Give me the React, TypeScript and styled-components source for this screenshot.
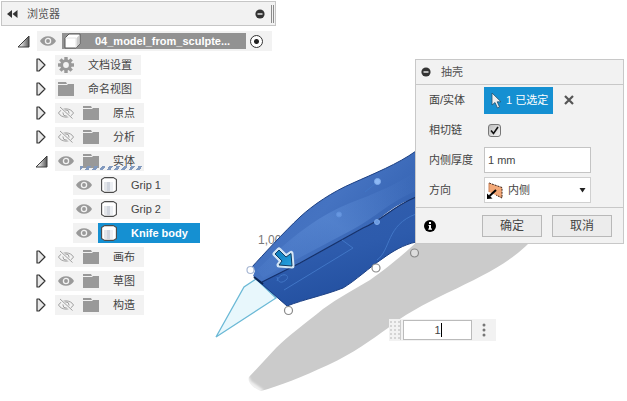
import React, { useState } from "react";
import styled, { createGlobalStyle, css } from "styled-components";

const GlobalStyle = createGlobalStyle`
  *, *::before, *::after { box-sizing: border-box; }
  body {
    margin: 0;
    background: #fff;
    color: #444;
    font: 11px/16px "Liberation Sans", "Noto Sans CJK SC", sans-serif;
  }
  button, input, select { font: inherit; color: inherit; margin: 0; }
  svg { display: block; flex: none; }
`;

const Workspace = styled.main`
  position: relative;
  min-height: 100vh;
  overflow: hidden;
`;

const Scene = styled.svg`
  position: absolute;
  inset: 0;
  width: 100%;
  height: 100%;
`;

/* ---------- browser tree ---------- */

const BrowserPanel = styled.aside`
  position: relative;
  width: 276px;
  padding: 1px 0 0 1px;
`;

const BrowserHeader = styled.header`
  display: flex;
  align-items: center;
  height: 25px;
  padding-left: 5px;
  background: #f2f2f2;
  border: 1px solid #c6c6c6;
`;

const PanelTitle = styled.h2`
  flex: 1;
  margin: 0;
  font-size: 11px;
  line-height: 16px;
  font-weight: 400;
  color: #555;
`;

const IconButton = styled.button`
  display: flex;
  align-items: center;
  justify-content: center;
  flex: none;
  padding: 0;
  border: 0;
  background: none;
`;

const CollapseButton = styled(IconButton)`
  margin-right: 9px;
`;

const ResizeGrip = styled.span`
  width: 3px;
  height: 18px;
  margin: 0 1px 0 6px;
  border: solid #8c8c8c;
  border-width: 0 1px;
`;

const Tree = styled.ul`
  display: grid;
  gap: 4px;
  margin: 5px 0 0;
  padding: 0;
  list-style: none;
`;

const TreeRow = styled.li<{ $depth: number }>`
  display: flex;
  align-items: center;
  height: 20px;
  padding-left: ${(p) => 16 + p.$depth * 18}px;
`;

const Twisty = styled(IconButton)`
  width: 20px;
  height: 20px;
  justify-content: flex-start;
`;

const Spacer = styled.span`
  width: 20px;
`;

const Chip = styled.div`
  display: flex;
  align-items: center;
  height: 20px;
  padding-left: 3px;
  background: #f2f2f2;
`;

const EyeButton = styled(IconButton)`
  width: 16px;
  height: 20px;
  margin-right: 6px;
`;

type Tone = "plain" | "active" | "selected";

const NodeLabel = styled.span<{ $tone: Tone }>`
  position: relative;
  display: flex;
  align-items: center;
  gap: 14px;
  height: 20px;
  padding: 0 9px 0 3px;
  white-space: nowrap;
  ${(p) =>
    p.$tone === "active" &&
    css`
      height: 16px;
      padding: 0 16px 0 2px;
      background: #929292;
      color: #fff;
      font-weight: 700;
    `}
  ${(p) =>
    p.$tone === "selected" &&
    css`
      padding-right: 12px;
      background: #1590d2;
      color: #fff;
      font-weight: 700;
    `}
`;

const SettingsLabel = styled(NodeLabel)`
  padding-left: 0;
`;

const ActivateRadio = styled.input`
  appearance: none;
  flex: none;
  width: 13px;
  height: 13px;
  margin: 0 9px 0 4px;
  border: 1px solid #333;
  border-radius: 50%;
  background: radial-gradient(circle, #222 0 2px, #fff 3px);
`;

const Hatch = styled.span`
  position: absolute;
  left: 0;
  right: 2px;
  bottom: 1px;
  height: 4px;
  background: repeating-linear-gradient(125deg, #8199be 0 3px, transparent 3px 6px);
`;

const Eye = ({ hidden = false }: { hidden?: boolean }) =>
  hidden ? (
    <svg width="16" height="14" viewBox="0 0 16 14" fill="none" stroke="#a0a0a0">
      <path d="M0.5 7C3.5 1.5 12.5 1.5 15.5 7C12.5 12.500 3.5 12.500 0.500 7Z" />
      <circle cx="8" cy="7" r="3" />
      <path d="M2 1.500L14 12.500" stroke="#f2f2f2" strokeWidth="3" />
      <path d="M2 1L14.500 12.500" />
    </svg>
  ) : (
    <svg width="16" height="12" viewBox="0 0 16 12">
      <path d="M0 6C3-.4 13-.4 16 6C13 12.400 3 12.400 0 6Z" fill="#999" />
      <circle cx="8" cy="6" r="2.600" fill="none" stroke="#f2f2f2" strokeWidth="1.300" />
    </svg>
  );

const Folder = () => (
  <svg width="16" height="14" viewBox="0 0 16 14" fill="#999">
    <path d="M0 0H8L9 2H0Z M0 3H9L10 2H16V14H0Z" />
  </svg>
);

const Gear = () => (
  <svg width="16" height="16" viewBox="-8 -8 16 16">
    <g fill="#999">
      {[0, 45, 90, 135].map((a) => (
        <rect key={a} x="-1.700" y="-8" width="3.400" height="16" transform={`rotate(${a})`} />
      ))}
      <circle r="5.800" />
    </g>
    <circle r="2.900" fill="#f2f2f2" />
  </svg>
);

const Cylinder = () => (
  <svg width="16" height="16" viewBox="0 0 16 16">
    <path d="M3.500 .6H12.500L15.400 2.500V13.500L12.500 15.400H3.500L.6 13.500V2.500Z" fill="#fff" stroke="#4a4a4a" strokeWidth="1.100" strokeLinejoin="round" />
    <path d="M3 5H6V14H4L3 13Z" fill="#e3e6ea" />
    <path d="M6 5H9V14H6Z" fill="#d0d5de" />
    <path d="M9 5H12V14H9Z" fill="#eceff3" />
  </svg>
);

const Cube = () => (
  <svg width="17" height="16" viewBox="0 0 17 16">
    <path d="M1 5L5 1H16V11L12 15H1Z" fill="#fff" stroke="#5a5a5a" strokeLinejoin="round" />
    <path d="M12.500 5L15.500 2V11L12.500 14Z" fill="#ccc" />
    <path d="M1.500 5H12V14.500" fill="none" stroke="#e4e4e4" />
  </svg>
);

const TwistyIcon = ({ open }: { open: boolean }) =>
  open ? (
    <svg width="14" height="13" viewBox="0 0 14 13">
      <defs>
        <linearGradient id="openFill">
          <stop offset="0.300" stopColor="#ddd" />
          <stop offset="1" stopColor="#555" />
        </linearGradient>
      </defs>
      <path d="M1 12L12 1V12Z" fill="url(#openFill)" stroke="#3c3c3c" />
    </svg>
  ) : (
    <svg width="13" height="14" viewBox="0 0 13 14">
      <path d="M2 1H4L10 7L4 13H2Z" fill="#e8e8e8" stroke="#333" strokeWidth="1.200" strokeLinejoin="round" />
    </svg>
  );

const MinusDot = () => (
  <svg width="10" height="10" viewBox="0 0 10 10">
    <circle cx="5" cy="5" r="4.600" fill="#333" />
    <path d="M2.500 5H7.500" stroke="#fff" strokeWidth="1.300" />
  </svg>
);

type Kind = "root" | "settings" | "folder" | "body";
interface TreeNode {
  label: string;
  kind: Kind;
  depth: number;
  open?: boolean;
  visible?: boolean;
  tone?: Tone;
  hatched?: boolean;
}

const nodes: TreeNode[] = [
  { label: "04_model_from_sculpte...", kind: "root", depth: 0, open: true, visible: true, tone: "active" },
  { label: "文档设置", kind: "settings", depth: 1, open: false },
  { label: "命名视图", kind: "folder", depth: 1, open: false },
  { label: "原点", kind: "folder", depth: 1, open: false, visible: false },
  { label: "分析", kind: "folder", depth: 1, open: false, visible: false },
  { label: "实体", kind: "folder", depth: 1, open: true, visible: true, hatched: true },
  { label: "Grip 1", kind: "body", depth: 2, visible: true },
  { label: "Grip 2", kind: "body", depth: 2, visible: true },
  { label: "Knife body", kind: "body", depth: 2, visible: true, tone: "selected" },
  { label: "画布", kind: "folder", depth: 1, open: false, visible: false },
  { label: "草图", kind: "folder", depth: 1, open: false, visible: true },
  { label: "构造", kind: "folder", depth: 1, open: false, visible: false },
];

const kindIcon: Record<Kind, React.ReactNode> = {
  root: <Cube />,
  settings: <Gear />,
  folder: <Folder />,
  body: <Cylinder />,
};

const Node = ({ node }: { node: TreeNode }) => {
  const Label = node.visible === undefined ? SettingsLabel : NodeLabel;
  return (
    <TreeRow $depth={node.depth}>
      {node.open === undefined ? (
        <Spacer />
      ) : (
        <Twisty aria-label={node.label} aria-expanded={node.open}>
          <TwistyIcon open={node.open} />
        </Twisty>
      )}
      <Chip>
        {node.visible !== undefined && (
          <EyeButton aria-label={node.label} aria-pressed={node.visible}>
            <Eye hidden={!node.visible} />
          </EyeButton>
        )}
        <Label $tone={node.tone ?? "plain"}>
          {kindIcon[node.kind]}
          {node.label}
          {node.hatched && <Hatch />}
        </Label>
        {node.kind === "root" && (
          <ActivateRadio type="radio" name="component" defaultChecked aria-label={node.label} />
        )}
      </Chip>
    </TreeRow>
  );
};

/* ---------- shell dialog ---------- */

const Dialog = styled.form`
  position: absolute;
  top: 59px;
  right: 3px;
  width: 209px;
  background: #f2f2f2;
  border: 1px solid #c8c8c8;
`;

const DialogHeader = styled.header`
  display: flex;
  align-items: center;
  gap: 10px;
  height: 25px;
  padding-left: 5px;
  border-bottom: 1px solid #c8c8c8;
`;

const Fields = styled.div`
  display: grid;
  grid-template-columns: 55px 1fr;
  grid-template-rows: repeat(4, 30px);
  align-items: center;
  padding: 0 32px 2px 13px;
`;

const FieldLabel = styled.label`
  white-space: nowrap;
`;

const SelectionRow = styled.div`
  display: flex;
  align-items: center;
  gap: 11px;
`;

const SelectionButton = styled.button`
  display: flex;
  align-items: center;
  gap: 4px;
  height: 27px;
  padding: 0 5px 0 7px;
  border: 0;
  background: #1590d2;
  color: #fff;
  white-space: nowrap;
`;

const CheckBox = styled.span`
  position: relative;
  display: block;
  width: 13px;
  height: 13px;
  margin-left: 4px;

  input {
    appearance: none;
    display: block;
    width: 13px;
    height: 13px;
    border: 1px solid #777;
    border-radius: 3px;
    background: linear-gradient(135deg, #bcbcbc, #f4f4f4);
  }
  svg {
    position: absolute;
    inset: 0;
    pointer-events: none;
  }
`;

const TextInput = styled.input`
  width: 100%;
  height: 26px;
  padding: 0 3px;
  border: 1px solid #c4c4c4;
  border-radius: 0;
  background: #fff;
  outline: 0;
`;

const SelectBox = styled.span`
  position: relative;
  display: block;

  select {
    appearance: none;
    width: 100%;
    height: 26px;
    padding: 0 16px 0 23px;
    border: 1px solid #d0d0d0;
    border-radius: 0;
    background: #fff;
  }
  svg {
    position: absolute;
    top: 5px;
    left: 3px;
    pointer-events: none;
  }
  svg:last-child {
    top: 11px;
    left: auto;
    right: 5px;
  }
`;

const DialogFooter = styled.footer`
  display: flex;
  align-items: center;
  gap: 10px;
  height: 36px;
  padding: 0 11px 0 8px;
  border-top: 1px solid #c8c8c8;
`;

const InfoButton = styled(IconButton)`
  margin-right: auto;
`;

const ActionButton = styled.button`
  width: 60px;
  height: 22px;
  padding: 0;
  border: 1px solid #b8b8b8;
  background: #ececec;
  font-size: 12px;
  line-height: 16px;
`;

/* ---------- in-canvas value box ---------- */

const ValueBox = styled.div`
  position: absolute;
  left: 389px;
  top: 319px;
  display: flex;
  align-items: center;
  width: 107px;
  height: 22px;
  background: #f2f2f2;
`;

const DragHandle = styled.span`
  width: 12px;
  height: 20px;
  margin-right: 2px;
  border-right: 1px solid #ccc;
  background: radial-gradient(circle, #d4d4d4 1px, transparent 1px) 4px 0 / 4px 4px;
`;

const ValueField = styled.span`
  position: relative;
  width: 69px;
`;

const ValueInput = styled(TextInput)`
  display: block;
  height: 20px;
  border-color: #bbb;
  text-align: center;
`;

const Caret = styled.span`
  position: absolute;
  left: calc(50% + 3px);
  top: 3px;
  width: 1px;
  height: 14px;
  background: #000;
`;

const MoreButton = styled(IconButton)`
  flex: 1;
  height: 20px;
`;

const Knife = () => (
  <Scene viewBox="0 0 627 401" preserveAspectRatio="xMinYMin meet" aria-hidden="true">
    <defs>
      <linearGradient id="upper" x1="0" y1="0" x2="1" y2="0.700">
        <stop offset="0" stopColor="#3c69bb" />
        <stop offset="0.500" stopColor="#4573c1" />
        <stop offset="1" stopColor="#2f5dad" />
      </linearGradient>
      <linearGradient id="lower" x1="0" y1="0" x2="0.400" y2="1">
        <stop offset="0" stopColor="#325fae" />
        <stop offset="0.600" stopColor="#2d5bac" />
        <stop offset="1" stopColor="#2350a0" />
      </linearGradient>
      <linearGradient id="sheen" x1="0" y1="1" x2="1" y2="0">
        <stop offset="0" stopColor="#5c8cd8" stopOpacity="0.100" />
        <stop offset="0.500" stopColor="#6595dd" stopOpacity="0.450" />
        <stop offset="1" stopColor="#5c8cd8" stopOpacity="0" />
      </linearGradient>
      <linearGradient id="arrow" x1="0" y1="0" x2="1" y2="1">
        <stop offset="0" stopColor="#0d78b8" />
        <stop offset="1" stopColor="#25a2e2" />
      </linearGradient>
      <filter id="soft">
        <feGaussianBlur stdDeviation="1" />
      </filter>
    </defs>
    <path
      d="M249 377C247 381 252 388 261 391C279 386 302 377 328 365C354 353 371 340 388 328C402 316 424 304 447 293C482 276 508 264 529 243L533 238H421C405 253 391 265 370 280C355 289 338 298 323 309C306 323 288 336 276 348Z"
      fill="#cbcbcb"
    />
    <path d="M248 374L244 382L257 394L264 390L251 381Z" fill="#fff" opacity="0.700" filter="url(#soft)" />
    <path d="M216 337L244 287L256 279L276 298Z" fill="#e8f7fc" stroke="#6bb9d6" strokeWidth="1.300" />
    <text x="258" y="244" fontSize="12" fill="#777">1,00</text>
    <path d="M252 267C262 256 284 232 300 217C313 205 332 192 353 183C373 174 398 164 416 151V198C390 205 384 219 363 228L300 263L262 283L253 276L255 271Z" fill="url(#upper)" />
    <path d="M257 270C283 245 314 217 350 203C374 194 400 183 416 171V191C389 202 378 216 350 231L299 258L263 278Z" fill="url(#sheen)" />
    <path d="M262 282L300 263L363 228C384 219 390 208 416 197V242C403 245 393 251 382 259C370 267 355 281 343 288C322 296 305 299 287 306L254 278Z" fill="url(#lower)" />
    <path d="M252 267C262 256 284 232 300 217C313 205 332 192 353 183C373 174 398 164 416 151M416 242C403 245 393 251 382 259C370 267 355 281 343 288C322 296 305 299 287 306L254 277" fill="none" stroke="#1b3f83" strokeWidth="1" />
    <path d="M262 282L300 263L363 228C384 219 390 208 416 197" fill="none" stroke="#132f69" strokeWidth="1.200" />
    <path d="M284 290L353 248L342 240M377 260C391 250 386 225 416 214M277 281C280 272 290 274 287 279C282 284 278 283 277 277M365 192L376 183" fill="none" stroke="#4176c6" strokeWidth="1" />
    <path d="M254 277L263 284" stroke="#0b2451" strokeWidth="2" />
    <g fill="#6b9be2" stroke="#7fabea">
      <circle cx="377.500" cy="181.500" r="3" fill="#8db9f5" />
      <circle cx="339" cy="214.500" r="2.500" fill="#6897e0" stroke="#5f90db" />
      <circle cx="377" cy="222" r="2.500" />
    </g>
    <g fill="#fff" stroke="#8a8a8a" strokeWidth="1.200">
      <circle cx="250.500" cy="270" r="3.500" stroke="#a8b8d4" />
      <circle cx="288.500" cy="310.500" r="4" />
      <circle cx="376" cy="268" r="4" />
      <circle cx="414.500" cy="253" r="4" fill="#ddd" />
    </g>
    <path
      d="M279 250L286 257L291 253.500L292 266L279 265L282 261L275 254Z"
      fill="#d3e5f5"
      stroke="#d3e5f5"
      strokeWidth="5"
      strokeLinejoin="round"
    />
    <path d="M279 250L286 257L291 253.500L292 266L279 265L282 261L275 254Z" fill="url(#arrow)" stroke="#123c62" strokeLinejoin="round" />
  </Scene>
);

export default function App() {
  const [thickness, setThickness] = useState("1 mm");
  const [value, setValue] = useState("1");

  return (
    <Workspace>
      <GlobalStyle />
      <Knife />
      <BrowserPanel>
        <BrowserHeader>
          <CollapseButton aria-label="浏览器">
            <svg width="11" height="8" viewBox="0 0 11 8" fill="#333">
              <path d="M5 0V8L0 4Z M10.500 0V8L5.500 4Z" />
            </svg>
          </CollapseButton>
          <PanelTitle>浏览器</PanelTitle>
          <IconButton aria-label="浏览器">
            <MinusDot />
          </IconButton>
          <ResizeGrip />
        </BrowserHeader>
        <Tree>
          {nodes.map((node) => (
            <Node key={node.label} node={node} />
          ))}
        </Tree>
      </BrowserPanel>

      <Dialog onSubmit={(e) => e.preventDefault()}>
        <DialogHeader>
          <IconButton type="button" aria-label="抽壳">
            <MinusDot />
          </IconButton>
          <PanelTitle>抽壳</PanelTitle>
        </DialogHeader>
        <Fields>
          <FieldLabel htmlFor="faces">面/实体</FieldLabel>
          <SelectionRow>
            <SelectionButton id="faces" type="button">
              <svg width="11" height="17" viewBox="0 0 11 17">
                <path d="M1 1V13L4 10.500L6.500 16L8.500 15L6.200 9.800H10Z" fill="#eee" stroke="#24506f" strokeWidth="0.800" />
              </svg>
              1 已选定
            </SelectionButton>
            <IconButton type="button" aria-label="面/实体">
              <svg width="10" height="10" viewBox="0 0 10 10" stroke="#555" strokeWidth="2.200">
                <path d="M1 1L9 9M9 1L1 9" />
              </svg>
            </IconButton>
          </SelectionRow>
          <FieldLabel htmlFor="tangent">相切链</FieldLabel>
          <CheckBox>
            <input id="tangent" type="checkbox" defaultChecked />
            <svg width="13" height="13" viewBox="0 0 13 13" fill="none" stroke="#111" strokeWidth="1.600">
              <path d="M3 6.500L5.500 9.500L10 3" />
            </svg>
          </CheckBox>
          <FieldLabel htmlFor="thickness">内侧厚度</FieldLabel>
          <TextInput id="thickness" value={thickness} onChange={(e) => setThickness(e.target.value)} />
          <FieldLabel htmlFor="direction">方向</FieldLabel>
          <SelectBox>
            <svg width="16" height="17" viewBox="0 0 16 17">
              <path d="M2 1L15 5.500V16L2 10Z" fill="#f2a878" />
              <path d="M2 1L15 5.500V16L9 13" fill="none" stroke="#3a2015" strokeDasharray="2 1" />
              <path d="M2 10V1" stroke="#c9835a" />
              <path d="M9 8L2.500 14" stroke="#000" strokeWidth="2" />
              <path d="M0 17V11.500L5.500 16.500Z" fill="#000" />
            </svg>
            <select id="direction" defaultValue="内侧">
              <option>内侧</option>
            </select>
            <svg width="7" height="5" viewBox="0 0 7 5">
              <path d="M.5 0H6.500L3.500 4.500Z" fill="#222" />
            </svg>
          </SelectBox>
        </Fields>
        <DialogFooter>
          <InfoButton type="button" aria-label="抽壳">
            <svg width="12" height="12" viewBox="0 0 12 12">
              <circle cx="6" cy="6" r="6" fill="#000" />
              <path d="M5 2H7V4H5ZM4.500 5H7V8.500H8V9.800H4.300V8.500H5V6H4.500Z" fill="#fff" />
            </svg>
          </InfoButton>
          <ActionButton type="submit">确定</ActionButton>
          <ActionButton type="button">取消</ActionButton>
        </DialogFooter>
      </Dialog>

      <ValueBox>
        <DragHandle />
        <ValueField>
          <ValueInput aria-label="内侧厚度" value={value} onChange={(e) => setValue(e.target.value)} />
          <Caret />
        </ValueField>
        <MoreButton aria-label="内侧厚度">
          <svg width="4" height="14" viewBox="0 0 4 14" fill="#777">
            <circle cx="2" cy="2" r="1.500" />
            <circle cx="2" cy="7" r="1.500" />
            <circle cx="2" cy="12" r="1.500" />
          </svg>
        </MoreButton>
      </ValueBox>
    </Workspace>
  );
}
